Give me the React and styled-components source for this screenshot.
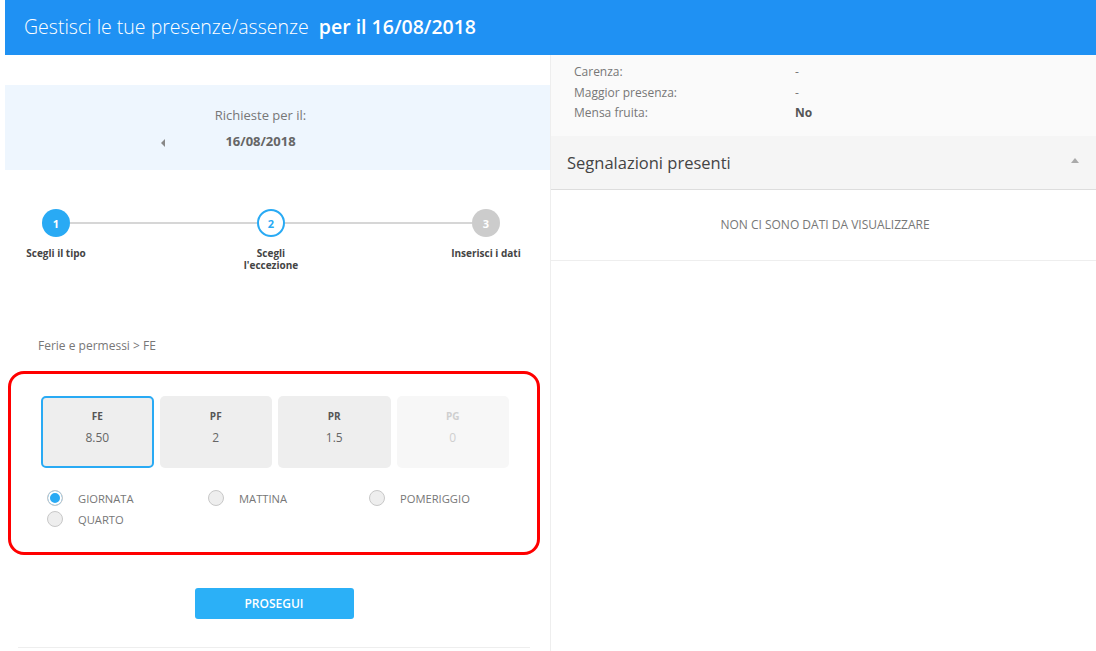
import React from 'react';
import styled, { createGlobalStyle } from 'styled-components';

const GlobalStyle = createGlobalStyle`
  html, body {
    margin: 0;
    padding: 0;
    background: #ffffff;
    font-family: "Open Sans", "Liberation Sans", sans-serif;
  }
  * {
    box-sizing: border-box;
  }
`;

const Page = styled.div`
  padding-left: 5px;
  height: 651px;
  overflow: hidden;
  display: flex;
  flex-direction: column;
`;

const Header = styled.header`
  height: 55px;
  background: #1f91f3;
  color: #ffffff;
  display: flex;
  align-items: center;
  padding: 0 0 2px 19px;
  font-size: 19.5px;
  white-space: pre;
`;

const TitleLight = styled.span`
  font-weight: 300;
`;

const TitleBold = styled.span`
  font-weight: 600;
`;

const Body = styled.div`
  flex: 1;
  display: grid;
  grid-template-columns: 545px 1fr;
`;

const LeftCol = styled.div`
  padding-top: 30px;
  display: flex;
  flex-direction: column;
`;

const DateBox = styled.div`
  height: 85px;
  background: #eef6fe;
  padding: 21px 34px 0 0;
  display: flex;
  flex-direction: column;
  align-items: center;
  color: #777;
  font-size: 13px;
`;

const DateLabel = styled.div`
  line-height: 18px;
  margin-bottom: 8px;
`;

const DateRow = styled.div`
  width: 100%;
  display: grid;
  grid-template-columns: 1fr auto 1fr;
  align-items: center;
`;

const Caret = styled.span`
  justify-self: end;
  margin-right: 60px;
  width: 0;
  height: 0;
  border-top: 4px solid transparent;
  border-bottom: 4px solid transparent;
  border-right: 4px solid #888;
  margin-top: 3px;
`;

const DateValue = styled.div`
  font-weight: 700;
  color: #666;
  line-height: 18px;
`;

const Stepper = styled.div`
  display: flex;
  align-items: flex-start;
  margin: 39px 50px 0 37px;
  height: 112px;
`;

const Step = styled.div`
  width: 28px;
  display: flex;
  flex-direction: column;
  align-items: center;
`;

const Circle = styled.div`
  width: 28px;
  height: 28px;
  border-radius: 50%;
  display: flex;
  align-items: center;
  justify-content: center;
  font-size: 11px;
  font-weight: 700;
  background: ${p => (p.$state === 'done' ? '#29aaf4' : p.$state === 'active' ? '#ffffff' : '#cccccc')};
  color: ${p => (p.$state === 'active' ? '#29aaf4' : '#ffffff')};
  border: ${p => (p.$state === 'active' ? '2px solid #29aaf4' : 'none')};
`;

const StepLabel = styled.div`
  width: 120px;
  margin-top: 11px;
  text-align: center;
  font-size: 10px;
  font-weight: 700;
  line-height: 11.5px;
  color: #444;
`;

const Connector = styled.div`
  flex: 1;
  height: 2px;
  margin-top: 13px;
  background: #d6d6d6;
`;

const Breadcrumb = styled.div`
  margin: 16px 0 0 33px;
  font-size: 12px;
  color: #777;
  line-height: 18px;
`;

const HighlightBox = styled.div`
  margin: 16px 10px 0 3px;
  border: 3px solid #ff0000;
  border-radius: 16px;
  padding: 22px 28px 25px 30px;
`;

const Cards = styled.div`
  display: grid;
  grid-template-columns: repeat(4, 1fr);
  gap: 6px;
`;

const Card = styled.div`
  height: 72px;
  border-radius: 5px;
  border: 2px solid ${p => (p.$selected ? '#29aaf4' : 'transparent')};
  background: ${p => (p.$disabled ? '#f7f7f7' : '#eeeeee')};
  color: ${p => (p.$disabled ? '#cfcfcf' : '#666')};
  display: flex;
  flex-direction: column;
  align-items: center;
  padding-top: 11px;
`;

const CardCode = styled.div`
  font-size: 10px;
  font-weight: 700;
  line-height: 14px;
  color: ${p => (p.$disabled ? '#cfcfcf' : '#555')};
`;

const CardValue = styled.div`
  font-size: 12px;
  line-height: 18px;
  margin-top: 6px;
`;

const Radios = styled.div`
  display: grid;
  grid-template-columns: repeat(3, 161px);
  row-gap: 5px;
  margin: 22px 0 0 6px;
`;

const RadioItem = styled.label`
  display: flex;
  align-items: center;
  gap: 15px;
  font-size: 11.2px;
  color: #777;
  height: 16px;
`;

const RadioDot = styled.span`
  width: 16px;
  height: 16px;
  border-radius: 50%;
  flex: none;
  border: 1px solid #c8c8c8;
  background: ${p => (p.$checked ? '#29aaf4' : '#eeeeee')};
  box-shadow: ${p => (p.$checked ? 'inset 0 0 0 2px #ffffff' : 'none')};
`;

const ButtonRow = styled.div`
  display: flex;
  justify-content: center;
  padding: 33px 0 28px;
  border-bottom: 1px solid #eeeeee;
  margin: 0 20px 0 13px;
`;

const Button = styled.button`
  width: 159px;
  height: 31px;
  border: none;
  border-radius: 3px;
  background: #2bb0f7;
  color: #ffffff;
  font-family: inherit;
  font-size: 12px;
  font-weight: 600;
`;

const RightCol = styled.div`
  border-left: 1px solid #eeeeee;
  display: flex;
  flex-direction: column;
`;

const InfoList = styled.div`
  background: #fafafa;
  padding: 7px 0 12px 23px;
`;

const InfoRow = styled.div`
  display: grid;
  grid-template-columns: 221px 1fr;
  font-size: 12px;
  line-height: 20.5px;
  color: #777;
`;

const InfoValue = styled.span`
  color: ${p => (p.$strong ? '#555' : '#777')};
  font-weight: ${p => (p.$strong ? 700 : 400)};
`;

const SectionHeader = styled.div`
  height: 54px;
  background: #f5f5f5;
  border-bottom: 1px solid #dddddd;
  display: flex;
  align-items: center;
  justify-content: space-between;
  padding: 0 17px 0 16px;
`;

const SectionTitle = styled.div`
  font-size: 16.5px;
  color: #444;
`;

const CaretUp = styled.span`
  width: 0;
  height: 0;
  border-left: 4px solid transparent;
  border-right: 4px solid transparent;
  border-bottom: 5px solid #aaaaaa;
  margin-bottom: 3px;
`;

const EmptyRow = styled.div`
  height: 71px;
  border-bottom: 1px solid #eeeeee;
  display: flex;
  align-items: center;
  justify-content: center;
  font-size: 12px;
  color: #777;
  padding-left: 3px;
`;

const steps = [
  { n: 1, label: 'Scegli il tipo', state: 'done' },
  { n: 2, label: "Scegli\nl'eccezione", state: 'active' },
  { n: 3, label: 'Inserisci i dati', state: 'todo' }
];

const cards = [
  { code: 'FE', value: '8.50', selected: true },
  { code: 'PF', value: '2' },
  { code: 'PR', value: '1.5' },
  { code: 'PG', value: '0', disabled: true }
];

const radios = [
  { label: 'GIORNATA', checked: true },
  { label: 'MATTINA' },
  { label: 'POMERIGGIO' },
  { label: 'QUARTO' }
];

const info = [
  { label: 'Carenza:', value: '-' },
  { label: 'Maggior presenza:', value: '-' },
  { label: 'Mensa fruita:', value: 'No', strong: true }
];

const App = () => {
  return (
    <Page>
      <GlobalStyle />
      <Header>
        <TitleLight>Gestisci le tue presenze/assenze </TitleLight>
        <TitleBold> per il 16/08/2018</TitleBold>
      </Header>
      <Body>
        <LeftCol>
          <DateBox>
            <DateLabel>Richieste per il:</DateLabel>
            <DateRow>
              <Caret />
              <DateValue>16/08/2018</DateValue>
              <span />
            </DateRow>
          </DateBox>

          <Stepper>
            {steps.map((s, i) => (
              <React.Fragment key={s.n}>
                {i > 0 && <Connector />}
                <Step>
                  <Circle $state={s.state}>{s.n}</Circle>
                  <StepLabel>
                    {s.label.split('\n').map(line => (
                      <div key={line}>{line}</div>
                    ))}
                  </StepLabel>
                </Step>
              </React.Fragment>
            ))}
          </Stepper>

          <Breadcrumb>Ferie e permessi &gt; FE</Breadcrumb>

          <HighlightBox>
            <Cards>
              {cards.map(c => (
                <Card key={c.code} $selected={c.selected} $disabled={c.disabled}>
                  <CardCode $disabled={c.disabled}>{c.code}</CardCode>
                  <CardValue>{c.value}</CardValue>
                </Card>
              ))}
            </Cards>
            <Radios>
              {radios.map(r => (
                <RadioItem key={r.label}>
                  <RadioDot $checked={r.checked} />
                  {r.label}
                </RadioItem>
              ))}
            </Radios>
          </HighlightBox>

          <ButtonRow>
            <Button>PROSEGUI</Button>
          </ButtonRow>
        </LeftCol>

        <RightCol>
          <InfoList>
            {info.map(row => (
              <InfoRow key={row.label}>
                <span>{row.label}</span>
                <InfoValue $strong={row.strong}>{row.value}</InfoValue>
              </InfoRow>
            ))}
          </InfoList>
          <SectionHeader>
            <SectionTitle>Segnalazioni presenti</SectionTitle>
            <CaretUp />
          </SectionHeader>
          <EmptyRow>NON CI SONO DATI DA VISUALIZZARE</EmptyRow>
        </RightCol>
      </Body>
    </Page>
  );
};

export default App;
